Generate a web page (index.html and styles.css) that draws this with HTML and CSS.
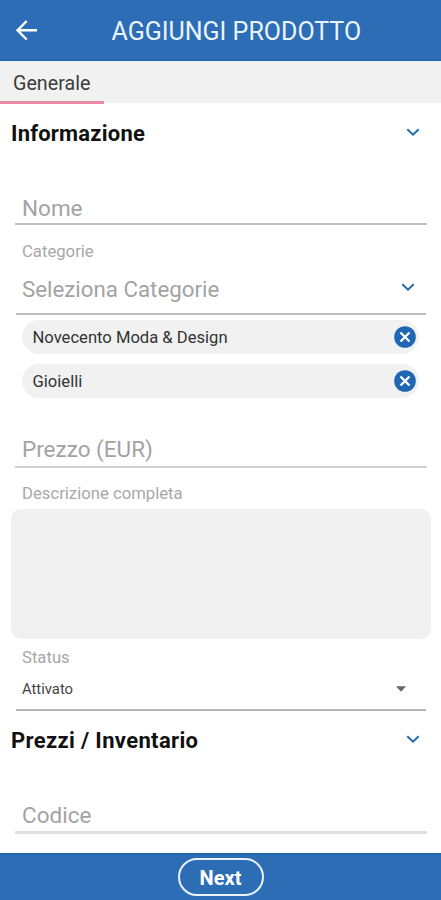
FILE: index.html
```html
<!DOCTYPE html>
<html lang="it">
<head>
<meta charset="utf-8">
<title>Aggiungi prodotto</title>
<link rel="stylesheet" href="styles.css">
</head>
<body>
<header class="topbar">
  <svg class="back" viewBox="0 0 30 30" width="30" height="30"><path d="M26 15.300H7M15.700 6L6.500 15.300l9.200 9.200" fill="none" stroke="#fff" stroke-width="2.400"/></svg>
  <h1 class="title">AGGIUNGI PRODOTTO</h1>
</header>
<nav class="tabs"><div class="tab">Generale</div></nav>
<main class="form">
  <section class="section">
    <h2>Informazione</h2>
    <svg class="chev" viewBox="0 0 14 9" width="14" height="9"><path d="M1.300 1.300L7 6.700l5.700-5.400"/></svg>
  </section>
  <div class="field name">Nome</div>
  <div class="label cat-label">Categorie</div>
  <div class="field select"><span>Seleziona Categorie</span>
    <svg class="chev" viewBox="0 0 14 9" width="14" height="9"><path d="M1.300 1.300L7 6.700l5.700-5.400"/></svg>
  </div>
  <div class="chips">
    <div class="chip"><span>Novecento Moda &amp; Design</span><svg viewBox="0 0 22 22" width="22" height="22"><circle cx="11" cy="11" r="10.800" fill="#1f66b5"/><path d="M6.500 6.500l9 9M15.500 6.500l-9 9" stroke="#fff" stroke-width="2.300"/></svg></div>
    <div class="chip"><span>Gioielli</span><svg viewBox="0 0 22 22" width="22" height="22"><circle cx="11" cy="11" r="10.800" fill="#1f66b5"/><path d="M6.500 6.500l9 9M15.500 6.500l-9 9" stroke="#fff" stroke-width="2.300"/></svg></div>
  </div>
  <div class="field price">Prezzo (EUR)</div>
  <div class="label desc-label">Descrizione completa</div>
  <div class="textarea"></div>
  <div class="label status-label">Status</div>
  <div class="dropdown"><span>Attivato</span><svg viewBox="0 0 10 6" width="10" height="6"><path d="M0 0.300h10L5 5.800z" fill="#666"/></svg></div>
  <section class="section second">
    <h2>Prezzi / Inventario</h2>
    <svg class="chev" viewBox="0 0 14 9" width="14" height="9"><path d="M1.300 1.300L7 6.700l5.700-5.400"/></svg>
  </section>
  <div class="field code">Codice</div>
</main>
<footer class="bottom"><button class="next">Next</button></footer>
</body>
</html>
```
FILE: styles.css
```css
*{box-sizing:border-box}
body{margin:0;width:441px;height:900px;overflow:hidden;background:#fff;font-family:Roboto,sans-serif;display:flex;flex-direction:column}
.topbar{height:61px;flex:none;background:#2c6db5;border-bottom:2px solid #1f66ad;display:flex;align-items:center;padding-left:11px}
.back{flex:none}
.title{margin:4px 0 0;padding-left:70.500px;font-size:25px;font-weight:400;color:#eaf4ff;line-height:30px;white-space:nowrap}
.tabs{height:42px;flex:none;background:#f1f1f1;display:flex}
.tab{width:104px;height:43px;border-bottom:3px solid #e88aa6;padding:12px 0 0 13px;font-size:19.7px;line-height:22px;color:#3c3c3c}
.form{flex:1;display:flex;flex-direction:column}
.section{height:60px;flex:none;display:flex;align-items:center;justify-content:space-between;padding:0 21px 0 11px}
h2{margin:2px 0 0;font-size:22px;line-height:28px;font-weight:700;color:#111;letter-spacing:.2px}
.second h2{margin-top:0;margin-bottom:1px;letter-spacing:.35px}
.chev{flex:none;fill:none;stroke:#2569b3;stroke-width:2}
.section .chev{margin-bottom:1px}
.second .chev{margin-bottom:3px}
.field{margin:0 14px 0 15px;padding:2px 7px 0;flex:none;border-bottom:2px solid #bebebe;color:#a3a3a3;font-size:22.5px;display:flex;align-items:center}
.name{height:36px;margin-top:26px;padding-top:4px}
.label{flex:none;margin-left:22px;color:#a8a8a8;font-size:16.7px;line-height:20px}
.cat-label{margin-top:17px}
.select{height:53px;margin-left:16px;margin-right:15px;padding:0 11px 0 6px;justify-content:space-between}
.select span{margin-top:3px;font-size:22.3px}
.chips{display:flex;flex-direction:column;gap:10px;margin:5px 22px 0;flex:none}
.chip{height:34px;border-radius:17px;background:#f1f1f1;display:flex;align-items:center;justify-content:space-between;padding:0 3px 0 10.500px;font-size:16.6px;color:#333}
.chip svg{margin-bottom:1px}
.price{height:36px;margin-top:34px;padding-top:0;border-color:#d0d0d0}
.desc-label{margin-top:16px}
.textarea{flex:none;height:130px;margin:5px 10px 0 11px;border-radius:10px;background:#f0f0f0}
.status-label{margin-top:9px}
.dropdown{flex:none;height:43px;margin:0 15px 0 16px;padding:1px 20px 0 6px;border-bottom:2px solid #b5b5b5;display:flex;align-items:center;justify-content:space-between;font-size:14.8px;color:#444}
.code{height:37px;margin-top:26px;border-bottom:3px solid #e0e0e0;padding-top:1px}
.bottom{flex:none;height:47px;background:#2c6db5;border-top:2px solid #1f66ad;display:flex;justify-content:center;align-items:flex-start;padding-top:3px}
.next{width:86px;height:38px;border:2px solid #eaf4ff;border-radius:19px;background:none;color:#fff;font:700 20px Roboto,sans-serif;padding:2px 0 0}
```
